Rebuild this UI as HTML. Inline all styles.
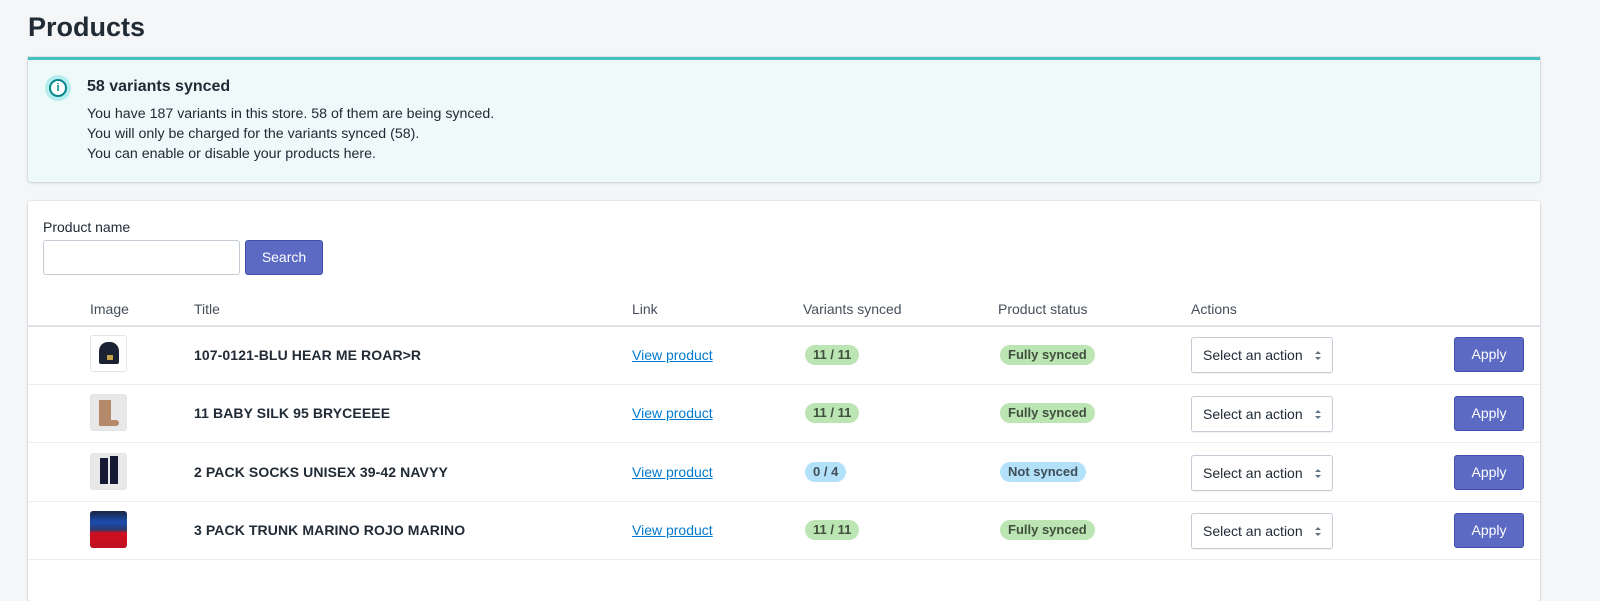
<!DOCTYPE html>
<html><head><meta charset="utf-8"><style>
*{box-sizing:border-box;margin:0;padding:0}
body{width:1600px;height:572px;overflow:hidden;background:#f4f6f8;font-family:"Liberation Sans",sans-serif;color:#212b36;position:relative}
.a{position:absolute}
h1{position:absolute;left:28px;top:12px;font-size:27px;font-weight:bold;color:#212b36}
.banner{left:28px;top:57px;width:1512px;height:125px;background:#eef9f9;border-top:3px solid #47c1bf;box-shadow:0 0 0 1px rgba(63,63,68,.08),0 1px 3px rgba(63,63,68,.15);border-radius:0 0 3px 3px}
.card{left:28px;top:201px;width:1512px;height:400px;background:#fff;box-shadow:0 0 0 1px rgba(63,63,68,.06),0 1px 3px rgba(63,63,68,.15);border-radius:3px}
.t{font-size:14px;color:#212b36}
.badge{position:absolute;height:20px;border-radius:10px;font-size:13px;font-weight:bold;line-height:20px;padding:0 8px;color:#414f3e}
.g{background:#bbe5b3}.b{background:#b4e1fa;color:#3e4e57}
.sel{position:absolute;left:1191px;width:142px;height:36px;border:1px solid #c4cdd5;border-radius:3px;background:#fff;font-size:14px;line-height:34px;padding-left:11px;box-shadow:0 1px 0 rgba(22,29,37,.05)}
.sel svg{position:absolute;left:123px;top:13px}
.ap{position:absolute;left:1454px;width:70px;height:35px;background:#5c6ac4;border:1px solid #3f4eae;border-radius:3px;color:#fff;font-size:14px;line-height:33px;text-align:center}
.lnk{position:absolute;left:632px;font-size:14px;color:#007ace;text-decoration:underline}
.ttl{position:absolute;left:194px;font-size:14px;font-weight:bold;letter-spacing:.1px}
.th{position:absolute;top:301px;font-size:14px;color:#454f5b}
.line{position:absolute;left:28px;width:1512px;height:1px;background:#ebeef0}
.img{position:absolute;left:90px;width:37px;height:37px;border-radius:3px;border:1px solid #e3e6e9;overflow:hidden;background:#e8e8e8}
</style></head><body>
<h1>Products</h1>
<div class="a banner"></div>
<div class="a" style="left:45px;top:75px;width:26px;height:26px;border-radius:50%;background:#b7ecec"></div>
<div class="a" style="left:49px;top:79px;width:18px;height:18px;border-radius:50%;border:2px solid #00848e;background:#fff;font-size:11px;font-weight:bold;color:#00848e;text-align:center;line-height:14px">i</div>
<div class="a" style="left:87px;top:78px;font-size:16px;font-weight:bold;color:#212b36">58 variants synced</div>
<div class="a t" style="left:87px;top:104px;line-height:20px;color:#212b36;font-size:14.2px">You have 187 variants in this store. 58 of them are being synced.<br>You will only be charged for the variants synced (58).<br>You can enable or disable your products here.</div>
<div class="a card"></div>
<div class="a t" style="left:43px;top:219px">Product name</div>
<div class="a" style="left:43px;top:240px;width:197px;height:35px;border:1px solid #c4cdd5;border-radius:3px;background:#fff"></div>
<div class="ap" style="left:245px;top:240px;width:78px;height:35px">Search</div>
<div class="th" style="left:90px">Image</div>
<div class="th" style="left:194px">Title</div>
<div class="th" style="left:632px">Link</div>
<div class="th" style="left:803px">Variants synced</div>
<div class="th" style="left:998px">Product status</div>
<div class="th" style="left:1191px">Actions</div>
<div class="line" style="top:325px;height:2px;background:#dfe3e8"></div>

<div class="img" style="top:335px;background:#fff"><div class="a" style="left:8px;top:6px;width:20px;height:22px;background:#1b2233;border-radius:9px 9px 2px 2px"></div><div class="a" style="left:16px;top:19px;width:6px;height:5px;background:#c9a04a"></div></div>
<div class="ttl" style="top:347px">107-0121-BLU HEAR ME ROAR&gt;R</div>
<div class="lnk" style="top:347px">View product</div>
<div class="badge g" style="left:805px;top:345px">11 / 11</div>
<div class="badge g" style="left:1000px;top:345px">Fully synced</div>
<div class="sel" style="top:337px">Select an action<svg width="6" height="9" viewBox="0 0 6 9"><path d="M0 3L3 0L6 3ZM0 6L3 9L6 6Z" fill="#637381"/></svg></div>
<div class="ap" style="top:337px">Apply</div>
<div class="line" style="top:384px"></div>

<div class="img" style="top:394px"><div class="a" style="left:8px;top:5px;width:12px;height:26px;background:#b58a6b"></div><div class="a" style="left:8px;top:25px;width:20px;height:6px;background:#b58a6b;border-radius:3px"></div></div>
<div class="ttl" style="top:405px">11 BABY SILK 95 BRYCEEEE</div>
<div class="lnk" style="top:405px">View product</div>
<div class="badge g" style="left:805px;top:403px">11 / 11</div>
<div class="badge g" style="left:1000px;top:403px">Fully synced</div>
<div class="sel" style="top:396px">Select an action<svg width="6" height="9" viewBox="0 0 6 9"><path d="M0 3L3 0L6 3ZM0 6L3 9L6 6Z" fill="#637381"/></svg></div>
<div class="ap" style="top:396px">Apply</div>
<div class="line" style="top:442px"></div>

<div class="img" style="top:453px"><div class="a" style="left:9px;top:4px;width:8px;height:26px;background:#141a33"></div><div class="a" style="left:19px;top:2px;width:8px;height:28px;background:#141a33"></div></div>
<div class="ttl" style="top:464px">2 PACK SOCKS UNISEX 39-42 NAVYY</div>
<div class="lnk" style="top:464px">View product</div>
<div class="badge b" style="left:805px;top:462px">0 / 4</div>
<div class="badge b" style="left:1000px;top:462px">Not synced</div>
<div class="sel" style="top:455px">Select an action<svg width="6" height="9" viewBox="0 0 6 9"><path d="M0 3L3 0L6 3ZM0 6L3 9L6 6Z" fill="#637381"/></svg></div>
<div class="ap" style="top:455px">Apply</div>
<div class="line" style="top:501px"></div>

<div class="img" style="top:511px;border:none;background:linear-gradient(180deg,#1a2540 0,#1a4db0 30%,#2a3a70 50%,#d01020 60%,#c01020 100%)"></div>
<div class="ttl" style="top:522px">3 PACK TRUNK MARINO ROJO MARINO</div>
<div class="lnk" style="top:522px">View product</div>
<div class="badge g" style="left:805px;top:520px">11 / 11</div>
<div class="badge g" style="left:1000px;top:520px">Fully synced</div>
<div class="sel" style="top:513px">Select an action<svg width="6" height="9" viewBox="0 0 6 9"><path d="M0 3L3 0L6 3ZM0 6L3 9L6 6Z" fill="#637381"/></svg></div>
<div class="ap" style="top:513px">Apply</div>
<div class="line" style="top:559px"></div>
</body></html>
